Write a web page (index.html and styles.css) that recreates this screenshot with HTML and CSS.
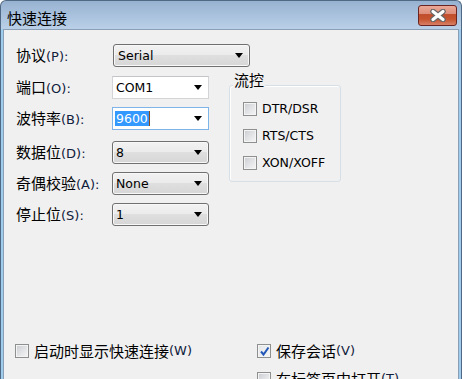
FILE: index.html
```html
<!DOCTYPE html>
<html lang="zh-CN">
<head>
  <meta charset="UTF-8" />
  <title>快速连接</title>
  <link rel="stylesheet" href="styles.css">
</head>
<body>
  <div class="window">
    <div class="titlebar">
      <span class="title">快速连接</span>
      <div class="close-btn">
        <svg width="18" height="13" viewBox="0 0 18 13">
          <path d="M4 2.5 L14 10.5 M14 2.5 L4 10.5" stroke="#666" stroke-width="5.5" stroke-linecap="round" fill="none"/>
          <path d="M4 2.5 L14 10.5 M14 2.5 L4 10.5" stroke="#fff" stroke-width="3.2" stroke-linecap="round" fill="none"/>
        </svg>
      </div>
    </div>

    <div class="client">
      <div class="row">
        <label class="lbl">协议<span class="key">(P):</span></label>
        <div class="combo list wide"><span class="val">Serial</span><i class="arrow"></i></div>
      </div>

      <div class="cols">
        <div class="fields">
          <div class="row">
            <label class="lbl">端口<span class="key">(O):</span></label>
            <div class="combo edit"><span class="val">COM1</span><i class="arrow"></i></div>
          </div>
          <div class="row">
            <label class="lbl">波特率<span class="key">(B):</span></label>
            <div class="combo edit focus"><span class="val sel">9600</span><span class="caret"></span><i class="arrow"></i></div>
          </div>
          <div class="row gap-more">
            <label class="lbl">数据位<span class="key">(D):</span></label>
            <div class="combo list"><span class="val">8</span><i class="arrow"></i></div>
          </div>
          <div class="row">
            <label class="lbl">奇偶校验<span class="key">(A):</span></label>
            <div class="combo list"><span class="val">None</span><i class="arrow"></i></div>
          </div>
          <div class="row">
            <label class="lbl">停止位<span class="key">(S):</span></label>
            <div class="combo list"><span class="val">1</span><i class="arrow"></i></div>
          </div>
        </div>

        <div class="group">
          <span class="legend">流控</span>
          <label class="chk"><span class="box"></span><span class="en">DTR/DSR</span></label>
          <label class="chk"><span class="box"></span><span class="en">RTS/CTS</span></label>
          <label class="chk"><span class="box"></span><span class="en">XON/XOFF</span></label>
        </div>
      </div>

      <div class="options">
        <label class="chk"><span class="box"></span>启动时显示快速连接<span class="key">(W)</span></label>
        <label class="chk"><span class="box checked"><svg width="11" height="11" viewBox="0 0 11 11"><path d="M2 5.5 L4.5 8.5 L9.5 1.5" stroke="#2358b8" stroke-width="2" fill="none"/></svg></span>保存会话<span class="key">(V)</span></label>
        <label class="chk col2"><span class="box"></span>在标签页中打开<span class="key">(T)</span></label>
      </div>
    </div>
  </div>
</body>
</html>
```

FILE: styles.css
```css
body {
  margin: 0;
  background: #fff;
  font-family: "Noto Sans CJK SC", sans-serif;
  color: #000;
}

.window {
  width: 462px;
  height: 379px;
  box-sizing: border-box;
  border: 1px solid #4f6883;
  border-bottom: none;
  border-radius: 6px 6px 0 0;
  padding: 0 2px;
  overflow: hidden;
  display: flex;
  flex-direction: column;
  background: linear-gradient(#97b2d1 0, #bad0e8 28px, #9fcbec 28px);
}

.titlebar {
  height: 28px;
  flex: none;
  display: flex;
  justify-content: space-between;
  align-items: flex-start;
}

.title {
  padding: 9px 0 0 4px;
  font-size: 15px;
  line-height: 16px;
  color: #000;
}

.close-btn {
  width: 37px;
  height: 19px;
  margin: 4px 2px 0 0;
  border: 1px solid #6a2421;
  border-radius: 3px;
  display: flex;
  align-items: center;
  justify-content: center;
  background: linear-gradient(#eaa897 0, #de8f7b 40%, #c04d2c 45%, #c65530 70%, #d88067 100%);
}

.client {
  flex: 1;
  border: 1px solid #8a9fb6;
  border-bottom: none;
  background: #f0f0f0;
  padding: 14px 0 0 12px;
}

.row {
  display: flex;
  align-items: center;
  height: 23px;
}

.lbl {
  width: 96px;
  font-size: 15px;
  line-height: 16px;
}

.key {
  font-family: "DejaVu Sans", sans-serif;
  font-size: 13px;
  color: #10203c;
}

.en {
  font-family: "DejaVu Sans", sans-serif;
  font-size: 12.5px;
}

.combo {
  position: relative;
  width: 97px;
  height: 23px;
  box-sizing: border-box;
  display: flex;
  align-items: center;
  padding-left: 3px;
  font-family: "DejaVu Sans", sans-serif;
  font-size: 12.5px;
}

.combo.wide {
  width: 137px;
  margin-left: 1px;
  padding-left: 4px;
}

.combo.list {
  border: 1px solid #707070;
  border-radius: 3px;
  background: linear-gradient(#f2f2f2 0, #ebebeb 50%, #dfdfdf 50%, #d6d6d6 100%);
  box-shadow: inset 0 0 0 1px #f8f8f8;
}

.combo.edit {
  border: 1px solid #d2d4d8;
  border-top-color: #c2c4c8;
  background: #fff;
}

.combo.focus {
  border-color: #7fb4e8;
}

.val.sel {
  background: #3399ff;
  color: #fff;
  padding: 0 1px;
  margin-left: -1px;
  line-height: 15px;
}

.caret {
  width: 1px;
  height: 15px;
  background: #8a4a20;
}

.arrow {
  margin-left: auto;
  margin-right: 6px;
  width: 0;
  height: 0;
  border-left: 4px solid transparent;
  border-right: 4px solid transparent;
  border-top: 5px solid #000;
}

.cols {
  display: flex;
  align-items: flex-start;
  margin-top: 9px;
}

.fields {
  display: flex;
  flex-direction: column;
  gap: 8px;
}

.gap-more {
  margin-top: 3px;
}

.group {
  margin: 9px 0 0 20px;
  width: 112px;
  height: 97px;
  box-sizing: border-box;
  border: 1px solid #d5dfe5;
  border-radius: 3px;
  box-shadow: inset 1px 1px 0 #fff;
  padding: 0 0 0 13px;
  display: flex;
  flex-direction: column;
  gap: 11px;
}

.legend {
  align-self: flex-start;
  margin: -14px 0 2px -10px;
  padding: 0 1px;
  background: #f0f0f0;
  font-size: 15px;
  line-height: 16px;
}

.chk {
  display: flex;
  align-items: center;
  height: 16px;
  font-size: 15px;
  line-height: 16px;
  white-space: nowrap;
}

.box {
  width: 14px;
  height: 14px;
  box-sizing: border-box;
  margin-right: 5px;
  border: 1px solid #8e8f8f;
  background: linear-gradient(135deg, #c9ccd0 0, #e6e7e9 60%, #f6f6f6 100%);
  box-shadow: inset 0 0 0 1px #f4f4f4;
  display: flex;
  align-items: center;
  justify-content: center;
}

.box.checked {
  background: linear-gradient(135deg, #e4e6e8 0, #f6f6f6 100%);
}

.options {
  display: grid;
  grid-template-columns: 242px auto;
  row-gap: 12px;
  margin: 117px 0 0 -1px;
}

.col2 {
  grid-column: 2;
}
```
